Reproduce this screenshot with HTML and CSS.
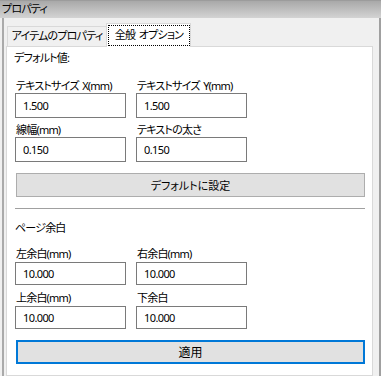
FILE: index.html
```html
<!DOCTYPE html>
<html lang="ja">
<head>
    <meta charset="UTF-8">
    <meta name="viewport" content="width=device-width, initial-scale=1.0">
    <title>プロパティ</title>
    <link rel="stylesheet" href="styles.css">
</head>
<body>

    <div class="window">
        <div class="titlebar">プロパティ</div>

        <div class="main">
            <div class="tabs">
                <div class="tab">アイテムのプロパティ</div>
                <div class="tab selected"><span class="focus">全般 オプション</span></div>
            </div>

            <div class="panel">
                <div class="heading">デフォルト値:</div>

                <div class="fields">
                    <div class="field">
                        <label>テキストサイズ X(mm)</label>
                        <input type="text" value="1.500">
                    </div>
                    <div class="field">
                        <label>テキストサイズ Y(mm)</label>
                        <input type="text" value="1.500">
                    </div>
                    <div class="field">
                        <label>線幅(mm)</label>
                        <input type="text" value="0.150">
                    </div>
                    <div class="field">
                        <label>テキストの太さ</label>
                        <input type="text" value="0.150">
                    </div>
                </div>

                <button class="btn">デフォルトに設定</button>

                <div class="separator"></div>

                <div class="heading section">ページ余白</div>

                <div class="fields margins">
                    <div class="field">
                        <label>左余白(mm)</label>
                        <input type="text" value="10.000">
                    </div>
                    <div class="field">
                        <label>右余白(mm)</label>
                        <input type="text" value="10.000">
                    </div>
                    <div class="field">
                        <label>上余白(mm)</label>
                        <input type="text" value="10.000">
                    </div>
                    <div class="field">
                        <label>下余白</label>
                        <input type="text" value="10.000">
                    </div>
                </div>

                <button class="btn apply">適用</button>
            </div>
        </div>
    </div>

</body>
</html>
```

FILE: styles.css
```css
body {
    margin: 0;
    background: #f0f0f0;
    font-family: "Noto Sans", "Noto Sans CJK JP", sans-serif;
    font-feature-settings: "palt";
    font-size: 11px;
    letter-spacing: -0.8px;
    word-spacing: 1.5px;
    white-space: nowrap;
    color: #000;
}
.window {
    width: 381px;
    height: 376px;
    display: flex;
    flex-direction: column;
    overflow: hidden;
}
.titlebar {
    height: 18px;
    box-sizing: border-box;
    border-top: 1px solid #9c9c9c;
    background: linear-gradient(#a9a9a9, #d3d3d3);
    padding-left: 2px;
    line-height: 16px;
}
.main {
    flex: 1;
    display: flex;
    flex-direction: column;
    margin-left: 2px;
    border-left: 2px solid #aaaaaa;
    padding-left: 2px;
    border-right: 2px solid #a0a0a0;
    padding-right: 6px;
}
.tabs {
    display: flex;
    align-items: flex-end;
    height: 23px;
    margin-top: 5px;
    padding-left: 1px;
}
.tab {
    box-sizing: border-box;
    width: 100px;
    height: 20px;
    border: 1px solid #d9d9d9;
    border-bottom: none;
    text-align: center;
    line-height: 18px;
}
.tab.selected {
    position: relative;
    width: 85px;
    height: 24px;
    margin-left: -1px;
    margin-bottom: -1px;
    padding: 1px 0 0 1px;
    background: #fff;
}
.focus {
    display: block;
    box-sizing: border-box;
    width: 82px;
    height: 21px;
    border: 1px dotted #000;
    line-height: 18px;
}
.panel {
    flex: 1;
    background: #fff;
    border: 1px solid #d9d9d9;
    padding: 3px 0 0 8px;
}
.heading {
    line-height: 16px;
    margin-left: -1px;
}
.fields {
    display: grid;
    grid-template-columns: 111px 111px;
    column-gap: 10px;
    row-gap: 4px;
    margin-top: 12px;
}
.field label {
    display: block;
    line-height: 15px;
    padding-left: 1px;
}
.field input {
    box-sizing: border-box;
    width: 111px;
    height: 25px;
    margin: 0;
    border: 1px solid #7a7a7a;
    padding: 0 7px;
    font: inherit;
    letter-spacing: -0.6px;
    color: #000;
    outline: none;
}
.margins {
    margin-top: 10px;
    row-gap: 5px;
}
.margins label {
    line-height: 16px;
}
.margins input {
    height: 23px;
}
.btn {
    display: block;
    box-sizing: border-box;
    width: 349px;
    height: 24px;
    margin: 11px 0 0 1px;
    background: #e1e1e1;
    border: 1px solid #adadad;
    font: inherit;
    color: #000;
    padding: 0;
}
.btn.apply {
    border: 2px solid #0078d7;
    font-size: 12px;
}
.separator {
    width: 350px;
    height: 1px;
    background: #a0a0a0;
    margin-top: 11px;
}
.section {
    margin-top: 11px;
    margin-left: 0;
}
```
